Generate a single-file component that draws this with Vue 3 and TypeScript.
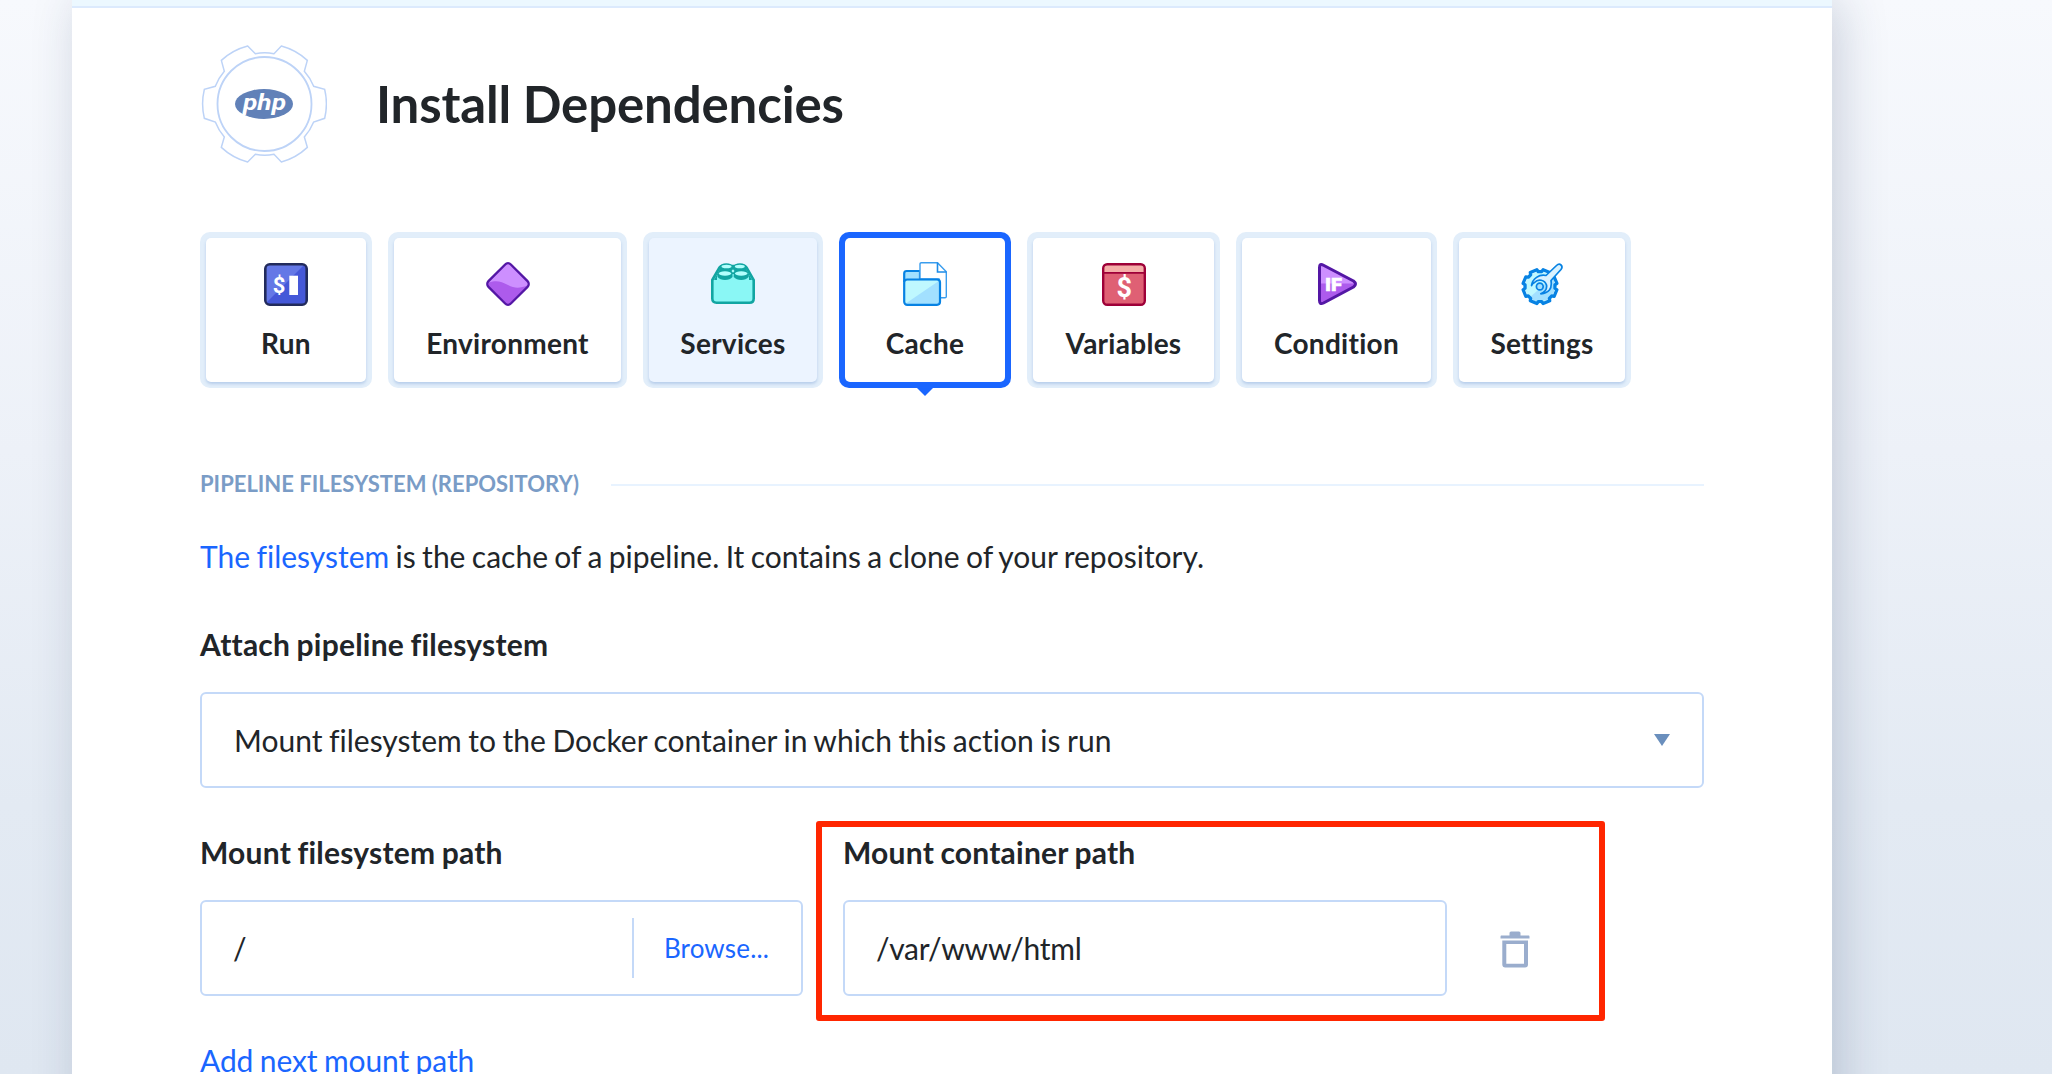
<script setup lang="ts">
import { ref } from 'vue'

interface Tab {
  id: string
  label: string
  width: number
}

const tabs: Tab[] = [
  { id: 'run', label: 'Run', width: 172 },
  { id: 'environment', label: 'Environment', width: 239 },
  { id: 'services', label: 'Services', width: 180 },
  { id: 'cache', label: 'Cache', width: 172 },
  { id: 'variables', label: 'Variables', width: 193 },
  { id: 'condition', label: 'Condition', width: 201 },
  { id: 'settings', label: 'Settings', width: 178 },
]

const active = ref('cache')
const hovered = ref('services')
const filesystemPath = ref('/')
const containerPath = ref('/var/www/html')

// Outline of an eight-toothed cog centred on (cx, cy)
function cog(cx: number, cy: number, outer: number, inner: number): string {
  const points: string[] = []
  for (let k = 0; k < 8; k++) {
    const mid = 45 * k
    const corners: [number, number][] = [[-16, inner], [-12, outer], [12, outer], [16, inner]]
    for (const [delta, r] of corners) {
      const a = ((mid + delta) * Math.PI) / 180
      points.push(`${(cx + r * Math.cos(a)).toFixed(2)} ${(cy + r * Math.sin(a)).toFixed(2)}`)
    }
  }
  return `M${points.join('L')}Z`
}
const cogPath = cog(20, 24.6, 17.2, 15)
</script>

<template>
  <div class="page">
    <main class="panel">
      <div class="strip"></div>
      <div class="content">
        <header class="head">
          <svg class="gear" viewBox="33 33 378 378" fill="none">
            <path
              d="M173 48L196 71A153 153 0 0 1 252 71L274 48A186 186 0 0 1 352 91L343 124A153 153 0 0 1 371 169L404 178A186 186 0 0 1 404 265L371 276A153 153 0 0 1 343 321L352 352A186 186 0 0 1 274 396L252 373A153 153 0 0 1 196 373L173 396A186 186 0 0 1 94 352L103 321A153 153 0 0 1 76 276L43 265A186 186 0 0 1 43 178L76 169A153 153 0 0 1 103 124L94 91A186 186 0 0 1 173 48Z"
              stroke="#bdd3f7" stroke-width="4.500"
            />
            <circle cx="223.500" cy="222" r="141" stroke="#bdd3f7" stroke-width="5.500" />
            <ellipse cx="222" cy="222" rx="87" ry="45" fill="#6181b8" />
            <text x="159" y="239" class="php" textLength="129" lengthAdjust="spacingAndGlyphs">php</text>
          </svg>
          <h1>Install Dependencies</h1>
        </header>

        <nav class="tabs">
          <button
            v-for="tab in tabs"
            :key="tab.id"
            type="button"
            class="tab"
            :class="{ active: tab.id === active, hovered: tab.id === hovered }"
            :style="{ width: tab.width + 'px' }"
            @click="active = tab.id"
          >
            <span class="face">
              <svg v-if="tab.id === 'run'" class="icon" viewBox="0 0 44 44">
                <rect x="1.300" y="2.300" width="41.400" height="40.400" rx="4.500" fill="#4558d8" />
                <path d="M2 41V6Q2 3 5 3H40Z" fill="#6478e6" />
                <rect x="1.300" y="2.300" width="41.400" height="40.400" rx="4.500" fill="none" stroke="#222b5c" stroke-width="2.600" />
                <text x="15" y="31" class="dollar small">$</text>
                <rect x="25.300" y="13.700" width="8.700" height="19.300" fill="#fff" />
              </svg>
              <svg v-else-if="tab.id === 'environment'" class="icon" viewBox="0 0 44 44">
                <rect x="6.200" y="6.200" width="31.600" height="31.600" rx="4" transform="rotate(45 22 22)" fill="#cd8fff" />
                <path d="M3 20.500C10 18 15 19 22 23S35 26 41 23.500L24 41Q22 43 20 41L3 24Q1 22 3 20.500Z" fill="#ad5bec" />
                <rect x="6.200" y="6.200" width="31.600" height="31.600" rx="4" transform="rotate(45 22 22)" fill="none" stroke="#5417a5" stroke-width="2.400" />
              </svg>
              <svg v-else-if="tab.id === 'services'" class="icon" viewBox="0 0 44 44">
                <path d="M1.300 18L8.500 5.500Q9.500 4 11 4H33Q34.500 4 35.500 5.500L42.700 18V36.500Q42.700 40.700 38.500 40.700H5.500Q1.300 40.700 1.300 36.500Z" fill="#8af7f5" stroke="#12a5a2" stroke-width="2.600" />
                <path d="M3 18L10 5H34L41 18H38V15Q38 12 34 12H10Q6 12 6 15V18Z" fill="#12a5a2" />
                <g fill="#12a5a2">
                  <ellipse cx="15.300" cy="4.500" rx="6.500" ry="3.300" />
                  <ellipse cx="29" cy="4.500" rx="6.500" ry="3.300" />
                  <rect x="9" y="4.500" width="26" height="7" />
                  <path d="M6.500 11.500H21.500V15Q19 18 14 18T6.500 15Z" />
                  <path d="M22.700 11.500H37.700V15Q35 18 30.200 18T22.700 15Z" />
                </g>
                <g fill="#b2fffd">
                  <ellipse cx="15.500" cy="4.500" rx="5" ry="1.800" />
                  <ellipse cx="28.800" cy="4.500" rx="5" ry="1.800" />
                  <ellipse cx="14" cy="11.500" rx="6.300" ry="2.200" />
                  <ellipse cx="30.200" cy="11.500" rx="6.300" ry="2.200" />
                  <path d="M22 7.200L23.500 9L22 10.800L20.500 9Z" />
                </g>
              </svg>
              <svg v-else-if="tab.id === 'cache'" class="icon" viewBox="0 0 44 44">
                <path d="M1.200 19V11.500Q1.200 9 3.700 9H17V19Z" fill="#a2e0ff" stroke="#0782e3" stroke-width="2.200" />
                <path d="M17 17V2Q17 .7 18.300 .7H34.500L43.300 9.700V34.500Q43.300 35.700 42 35.700H36V17Z" fill="#fff" stroke="#3a9dee" stroke-width="1.400" />
                <path d="M34.500 .7V10H43.300" fill="none" stroke="#1c8ce8" stroke-width="1.600" />
                <rect x="1.200" y="17.500" width="35.800" height="25.300" rx="3" fill="#a2e0ff" />
                <path d="M2 42V20Q2 18.500 4 18.500H36.500Z" fill="#bff8ff" />
                <rect x="1.200" y="17.500" width="35.800" height="25.300" rx="3" fill="none" stroke="#0782e3" stroke-width="2.200" />
              </svg>
              <svg v-else-if="tab.id === 'variables'" class="icon" viewBox="0 0 44 44">
                <rect x="1.200" y="2.200" width="41.600" height="40.600" rx="4" fill="#df6074" />
                <path d="M1.500 10.500V5Q2 2.500 5 2.500H39Q42 2.500 42.500 5V10.500Z" fill="#f4aea8" />
                <path d="M2 10.800H42" stroke="#9e0038" stroke-width="1.800" />
                <rect x="1.200" y="2.200" width="41.600" height="40.600" rx="4" fill="none" stroke="#9e0038" stroke-width="2.400" />
                <text x="22.300" y="35" class="dollar">$</text>
              </svg>
              <svg v-else-if="tab.id === 'condition'" class="icon" viewBox="0 0 44 44">
                <path d="M4.500 5.500Q4.500 1 8.500 3.200L38.500 19Q42.500 22 38.500 25L8.500 41Q4.500 43 4.500 38.500Z" fill="#cd8fff" />
                <path d="M4.500 21.500H40.500Q40.500 23.500 38.500 25L8.500 41Q4.500 43 4.500 38.500Z" fill="#ad5bec" />
                <path d="M4.500 5.500Q4.500 1 8.500 3.200L38.500 19Q42.500 22 38.500 25L8.500 41Q4.500 43 4.500 38.500Z" fill="none" stroke="#5417a5" stroke-width="3" stroke-linejoin="round" />
                <text x="10" y="29" class="if" textLength="17" lengthAdjust="spacingAndGlyphs">IF</text>
              </svg>
              <svg v-else class="icon" viewBox="0 0 44 44">
                <path :d="cogPath" fill="#bff8ff" />
                <path d="M9 36L34 14V30L28 38L14 39Z" fill="#a2e0ff" />
                <path :d="cogPath" fill="none" stroke="#0782e3" stroke-width="3.200" stroke-linejoin="round" transform="rotate(22.500 20 24.600)" />
                <path d="M11.500 23.500A12 12 0 0 1 26 13.500L36.500 3.500Q39 1.200 41 3T41 7.500L31 18.500Q33 31 20.800 31.800Q27.500 29 26.500 23A7 7 0 0 0 14.500 20.500Q12.500 21.500 11.500 23.500Z" fill="#d9f2ff" stroke="#0782e3" stroke-width="1.700" stroke-linejoin="round" />
                <circle cx="19.800" cy="24.500" r="3.400" fill="#a2e0ff" stroke="#0782e3" stroke-width="1.700" />
              </svg>
              <span class="label">{{ tab.label }}</span>
            </span>
          </button>
        </nav>

        <div class="section"><h2>PIPELINE FILESYSTEM (REPOSITORY)</h2><i></i></div>

        <p class="intro"><a>The filesystem</a> is the cache of a pipeline. It contains a clone of your repository.</p>

        <div class="title attach">Attach pipeline filesystem</div>
        <div class="box select">
          <span>Mount filesystem to the Docker container in which this action is run</span>
          <svg class="caret" viewBox="0 0 16 12"><path d="M0 0H16L8 12Z" fill="#6a8fbd" /></svg>
        </div>

        <div class="row">
          <div class="field">
            <div class="title">Mount filesystem path</div>
            <div class="box">
              <span class="value">{{ filesystemPath }}</span>
              <a class="browse">Browse...</a>
            </div>
          </div>
          <div class="field container-path">
            <div class="title">Mount container path</div>
            <div class="box"><span class="value">{{ containerPath }}</span></div>
            <div class="highlight"></div>
          </div>
          <svg class="trash" viewBox="0 0 30 37" fill="#9aadcd">
            <path d="M1 4.500H9.500V2Q9.500 .5 11 .5H19Q20.500 .5 20.500 2V4.500H29Q29.500 4.500 29.500 6V7.500H.5V6Q.5 4.500 1 4.500Z" />
            <path fill-rule="evenodd" d="M2.300 9.500H28V33.500Q28 36.500 25 36.500H5.300Q2.300 36.500 2.300 33.500ZM6.300 13V32.800H24V13Z" />
          </svg>
        </div>

        <a class="add">Add next mount path</a>
      </div>
    </main>
  </div>
</template>

<style>
html,
body {
  margin: 0;
  overflow: hidden;
}
</style>

<style scoped>
* {
  box-sizing: border-box;
}
.page {
  width: 2052px;
  height: 1074px;
  padding-left: 72px;
  overflow: hidden;
  background: linear-gradient(#f7f9fd, #edf1f8 42%, #e3eaf3 75%, #dfe7f1);
  font-family: Lato, sans-serif;
  font-size: 30px;
  line-height: 36px;
  font-variant-ligatures: none;
  word-spacing: -1.1px;
  color: #212529;
}
.panel {
  width: 1760px;
  height: 1200px;
  background: #fff;
  box-shadow: 8px 0 46px rgba(30, 50, 90, 0.2);
}
.strip {
  height: 8px;
  background: #ecf8ff;
  border-bottom: 2px solid #dceafd;
}
.content {
  padding: 33px 128px 0;
}
.head {
  display: flex;
  align-items: center;
  height: 126px;
}
.gear {
  width: 126px;
  height: 126px;
  margin-left: 1px;
}
.php {
  font: italic 700 66px Roboto, sans-serif;
  fill: #fff;
}
h1 {
  margin: 0 0 1px 49px;
  font-size: 51px;
  line-height: 62px;
  font-weight: 700;
  letter-spacing: -0.15px;
  word-spacing: -0.5px;
}
.tabs {
  display: flex;
  gap: 16px;
  margin-top: 65px;
}
.tab {
  position: relative;
  height: 156px;
  padding: 6px;
  border: 0;
  border-radius: 10px;
  background: #e2eefa;
  color: inherit;
  font: inherit;
}
.face {
  display: flex;
  flex-direction: column;
  align-items: center;
  height: 144px;
  padding-top: 24px;
  border-radius: 5px;
  background: #fff;
  box-shadow: 0 2px 3px rgba(60, 110, 190, 0.25);
}
.icon {
  width: 44px;
  height: 44px;
}
.label {
  margin-top: 20px;
  font-size: 28px;
  line-height: 34px;
  font-weight: 700;
  letter-spacing: 0.28px;
  white-space: nowrap;
}
.hovered .face {
  background: #ecf4ff;
}
.active {
  background: #1a66ff;
}
.active .face {
  box-shadow: none;
}
.active::after {
  content: '';
  position: absolute;
  left: 50%;
  top: 156px;
  margin-left: -8px;
  border: 8px solid transparent;
  border-top-color: #1a66ff;
  border-bottom: 0;
}
.dollar {
  font: 700 27px Roboto, sans-serif;
  text-anchor: middle;
  fill: #fff;
}
.dollar.small {
  font-size: 22px;
}
.if {
  font: 900 17.5px Roboto, sans-serif;
  fill: #fff;
  stroke: #fff;
  stroke-width: 0.5px;
}
.section {
  display: flex;
  align-items: center;
  gap: 32px;
  height: 28px;
  margin-top: 82px;
}
h2 {
  margin: 0;
  font-size: 22px;
  line-height: 28px;
  font-weight: 700;
  word-spacing: 0;
  color: #7a9cc6;
}
.section i {
  flex: 1;
  height: 2px;
  margin-top: 2px;
  background: #e8f3ff;
}
.intro {
  margin: 40px 0 0;
  word-spacing: -1.3px;
}
a {
  color: #1a66ff;
}
.title {
  font-weight: 700;
  letter-spacing: 0.22px;
}
.attach {
  margin-top: 52px;
}
.box {
  display: flex;
  align-items: center;
  height: 96px;
  margin-top: 30px;
  padding-left: 32px;
  border: 2px solid #c4d9f8;
  border-radius: 6px;
}
.select {
  justify-content: space-between;
  padding-right: 32px;
}
.caret {
  width: 16px;
  height: 12px;
}
.row {
  display: flex;
  margin-top: 46px;
}
.field {
  width: 603px;
}
.value {
  flex: 1;
  margin-left: -1px;
  letter-spacing: -0.3px;
}
.browse {
  height: 60px;
  padding: 0 32px 0 30px;
  border-left: 2px solid #c4d9f8;
  font-size: 26px;
  line-height: 61px;
  letter-spacing: 0.15px;
}
.container-path {
  position: relative;
  width: 604px;
  margin-left: 40px;
}
.highlight {
  position: absolute;
  left: -27px;
  top: -13px;
  width: 789px;
  height: 200px;
  border: 6px solid #ff2600;
  border-radius: 3px;
}
.trash {
  width: 30px;
  height: 37px;
  margin: 97px 0 0 53px;
}
.add {
  display: block;
  margin-top: 46px;
  letter-spacing: -0.1px;
}
</style>
